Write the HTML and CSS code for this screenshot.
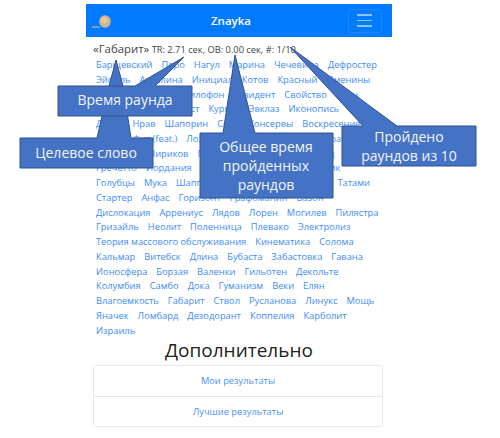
FILE: index.html
```html
<!DOCTYPE html>
<html lang="ru">
<head>
    <meta charset="UTF-8">
    <meta name="viewport" content="width=device-width, initial-scale=1.0">
    <title>Znayka</title>
    <link rel="stylesheet" href="styles.css">
</head>
<body>
    <div class="page">
        <nav class="navbar">
            <svg class="logo" width="22" height="16" viewBox="0 0 22 16">
                <path d="M0 14h8" stroke="#d9c9a8" stroke-width="1" fill="none"/>
                <ellipse cx="13" cy="8.5" rx="5.8" ry="6.2" fill="#d2b48c"/>
                <circle cx="12.5" cy="7.5" r="3" fill="#e0c9a3"/>
            </svg>
            <span class="brand">Znayka</span>
            <button class="toggler"><span></span><span></span><span></span></button>
        </nav>

        <div class="status"><span class="target">«Габарит»</span> TR: 2.71 сек, ОВ: 0.00 сек, #: 1/10.</div>

        <div class="words">
            <div class="word-row"><a>Барщевский</a><a>Перо</a><a>Нагул</a><a>Марина</a><a>Чечевица</a><a>Дефростер</a></div>
            <div class="word-row"><a>Эйфель</a><a>Ангелина</a><a>Инициал</a><a>Котов</a><a>Красный</a><a>Именины</a></div>
            <div class="word-row"><a>Виноградарство</a><a>Ксилофон</a><a>Резидент</a><a>Свойство</a><a>Клен</a></div>
            <div class="word-row"><a>Лабиринт</a><a>Финансист</a><a>Курган</a><a>Эвклаз</a><a>Иконопись</a></div>
            <div class="word-row"><a>Дрозд</a><a>Нрав</a><a>Шапорин</a><a>Сода</a><a>Консервы</a><a>Воскресение</a></div>
            <div class="word-row"><a>Лодка</a><a>Фит (feat.)</a><a>Лозунг</a><a>Паровозик</a><a>Барсук</a><a>Врач</a></div>
            <div class="word-row"><a>Сердолик</a><a>Чириков</a><a>Гравюрка</a><a>Контрабас</a><a>Завод</a></div>
            <div class="word-row"><a>Гречетто</a><a>Иордания</a><a>Паровоз</a><a>Телескопы</a><a>Парник</a></div>
            <div class="word-row"><a>Голубцы</a><a>Мука</a><a>Шаппель</a><a>Карусель</a><a>Термометр</a><a>Татами</a></div>
            <div class="word-row"><a>Стартер</a><a>Анфас</a><a>Горизонт</a><a>Графоманин</a><a>Вазон</a></div>
            <div class="word-row"><a>Дислокация</a><a>Аррениус</a><a>Лядов</a><a>Лорен</a><a>Могилев</a><a>Пилястра</a></div>
            <div class="word-row"><a>Гризайль</a><a>Неолит</a><a>Поленница</a><a>Плевако</a><a>Электролиз</a></div>
            <div class="word-row"><a>Теория массового обслуживания</a><a>Кинематика</a><a>Солома</a></div>
            <div class="word-row"><a>Кальмар</a><a>Витебск</a><a>Длина</a><a>Бубаста</a><a>Забастовка</a><a>Гавана</a></div>
            <div class="word-row"><a>Ионосфера</a><a>Борзая</a><a>Валенки</a><a>Гильотен</a><a>Декольте</a></div>
            <div class="word-row"><a>Колумбия</a><a>Самбо</a><a>Дока</a><a>Гуманизм</a><a>Веки</a><a>Елян</a></div>
            <div class="word-row"><a>Влагоемкость</a><a>Габарит</a><a>Ствол</a><a>Русланова</a><a>Линукс</a><a>Мощь</a></div>
            <div class="word-row"><a>Яначек</a><a>Ломбард</a><a>Дезодорант</a><a>Коппелия</a><a>Карболит</a></div>
            <div class="word-row"><a>Израиль</a></div>
        </div>

        <h2 class="extra-title">Дополнительно</h2>
        <div class="list-group">
            <a class="list-item">Мои результаты</a>
            <a class="list-item">Лучшие результаты</a>
        </div>
    </div>

    <!-- callouts pasted on top of the screenshot -->
    <svg class="callouts" width="500" height="438" viewBox="0 0 500 438">
        <g class="callout">
            <polygon points="97,138 109,86 116,60 123,86 131,138 153,138 153,168 20,168 20,138"/>
        </g>
        <g class="callout">
            <polygon points="58,86 135,86 184,57 155,86 192,86 192,116 58,116"/>
        </g>
        <g class="callout">
            <polygon points="200,133 223,133 235,55 255,133 333,133 333,198 200,198"/>
        </g>
        <g class="callout">
            <polygon points="342,126 363,126 290,47 397,126 476,126 476,166 342,166"/>
        </g>
        <text x="86" y="158">Целевое слово</text>
        <text x="125" y="105">Время раунда</text>
        <text x="266" y="152">Общее время</text>
        <text x="266" y="171">пройденных</text>
        <text x="266" y="190">раундов</text>
        <text x="409" y="142">Пройдено</text>
        <text x="409" y="161">раундов из 10</text>
    </svg>
</body>
</html>
```

FILE: styles.css
```css
body {
    margin: 0;
    background-color: #fff;
    color: #444;
    font-family: "Open Sans", "Noto Sans", sans-serif;
}
.page {
    width: 306px;
    margin-left: 86px;
    padding-top: 4px;
}
.navbar {
    display: flex;
    align-items: center;
    justify-content: space-between;
    height: 33px;
    padding: 0 10px 0 6px;
    box-sizing: border-box;
    background-color: #007bff;
}
.logo {
    display: block;
}
.brand {
    color: #fff;
    font-size: 11.5px;
    font-weight: 600;
}
.toggler {
    display: flex;
    flex-direction: column;
    align-items: center;
    justify-content: center;
    gap: 4px;
    width: 34px;
    height: 24px;
    padding: 0;
    background: none;
    border: 1px solid rgba(255, 255, 255, 0.1);
    border-radius: 3px;
}
.toggler span {
    width: 15px;
    height: 1.5px;
    background-color: rgba(255, 255, 255, 0.55);
}
.status {
    margin: 4px 0 0 7px;
    font-size: 9.3px;
    line-height: 15px;
    white-space: nowrap;
}
.target {
    font-size: 11.4px;
}
.words {
    margin: 1px 0 0 10px;
}
.word-row {
    display: flex;
    gap: 9px;
    height: 14.75px;
    font-size: 9.3px;
    line-height: 14.75px;
    white-space: nowrap;
}
.word-row a {
    color: #3d8bfd;
}
.extra-title {
    margin: 0 0 3px;
    color: #222;
    font-size: 19px;
    font-weight: 400;
    line-height: 24px;
    text-align: center;
}
.list-group {
    width: 290px;
    margin-left: 7px;
    border: 1px solid #e8e8e8;
    border-radius: 3px;
    box-sizing: border-box;
}
.list-item {
    display: block;
    height: 29.5px;
    color: #4a90ff;
    font-size: 9.3px;
    line-height: 29px;
    text-align: center;
}
.list-item + .list-item {
    border-top: 1px solid #e8e8e8;
}
.callouts {
    position: absolute;
    top: 0;
    left: 0;
}
.callout polygon {
    fill: #4472c4;
    stroke: #2f528f;
    stroke-width: 1;
}
.callouts text {
    fill: #f2f5fb;
    font-size: 14px;
    text-anchor: middle;
}
```
